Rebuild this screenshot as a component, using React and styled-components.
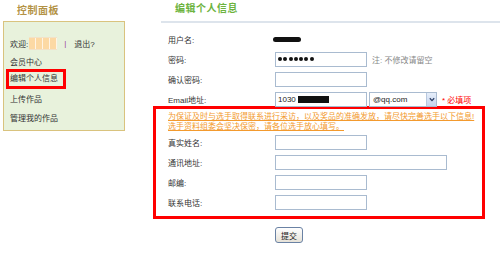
import React from 'react'
import styled, { createGlobalStyle } from 'styled-components'

const GlobalStyle = createGlobalStyle`
  html, body {
    margin: 0;
    padding: 0;
    background: #fff;
  }
  body {
    font-family: "Liberation Sans", "Noto Sans CJK SC", sans-serif;
    font-size: 8px;
    color: #333;
  }
`

const Page = styled.div`
  display: flex;
  width: 500px;
  height: 261px;
  overflow: hidden;
`

const Sidebar = styled.aside`
  width: 153px;
  flex: none;
`

const SideTitle = styled.h2`
  margin: 0;
  height: 21px;
  line-height: 21px;
  padding-left: 17px;
  font-size: 10px;
  font-weight: bold;
  letter-spacing: 0.5px;
  color: #b39245;
`

const SideBox = styled.div`
  margin-left: 3px;
  width: 122px;
  height: 110px;
  box-sizing: border-box;
  border: 1px solid #d9c37e;
  background: #e8f2dc;
  padding: 12px 0 0 6px;
`

const SideItem = styled.div`
  display: flex;
  align-items: center;
  height: 18.5px;
  color: #333;
`

const Marked = styled.span`
  display: inline-block;
  height: 14px;
  line-height: 14px;
  padding: 0 5px 0 1px;
  margin-left: -1px;
  margin-top: -2px;
  outline: 3px solid #f00;
`

const NameBlur = styled.span`
  display: inline-block;
  width: 28px;
  height: 11px;
  margin-left: 1px;
  border-top: 1px solid #f2e2c8;
  border-bottom: 1px solid #f2e2c8;
  background: repeating-linear-gradient(90deg, #fcd9a4 0 6px, #fff4e4 6px 7px);
`

const Pipe = styled.span`
  margin: 0 8px 0 7px;
  color: #9a3c9a;
`

const Main = styled.main`
  flex: 1;
`

const MainTitle = styled.h1`
  margin: 0;
  height: 21px;
  line-height: 17px;
  padding-left: 22px;
  font-size: 10px;
  font-weight: bold;
  letter-spacing: 0.5px;
  color: #6cb33e;
`

const Divider = styled.div`
  margin-left: 8px;
  height: 2px;
  background: #dde4ec;
`

const Form = styled.div`
  padding: 6px 0 0 15px;
`

const Row = styled.div`
  display: grid;
  grid-template-columns: 107px auto;
  align-items: center;
  height: 20px;
`

const Controls = styled.div`
  display: flex;
  align-items: center;
`

const Field = styled.div`
  display: flex;
  align-items: center;
  box-sizing: border-box;
  width: ${p => (p.$wide ? 172 : 92)}px;
  height: 15px;
  padding: 0 2px;
  border: 1px solid #a9bbd0;
  background: #fff;
  color: #222;
`

const Blob = styled.span`
  display: inline-block;
  width: ${p => p.$w}px;
  height: ${p => p.$h}px;
  margin-left: ${p => p.$ml || 0}px;
  background: #111;
  border-radius: ${p => p.$r || 0}px;
  filter: blur(${p => p.$blur || 0}px);
`

const Dot = styled.span`
  display: inline-block;
  width: 4px;
  height: 4px;
  margin-right: 1.3px;
  border-radius: 50%;
  background: #111;
`

const Hint = styled.span`
  margin-left: 5px;
  color: ${p => (p.$red ? '#f00' : '#888')};
`

const Select = styled.div`
  display: flex;
  align-items: center;
  box-sizing: border-box;
  width: 68px;
  height: 15px;
  margin-left: 2px;
  border: 1px solid #a9bbd0;
  background: #fff;
  color: #222;
`

const SelectText = styled.span`
  flex: 1;
  padding-left: 3px;
`

const SelectArrow = styled.span`
  display: flex;
  align-items: center;
  justify-content: center;
  width: 9px;
  height: 13px;
  border-left: 1px solid #b8c8de;
  background: linear-gradient(#e6eefa, #c6d5ee);
`

const Notice = styled.section`
  box-sizing: border-box;
  width: 332px;
  margin: -3px 0 0 -15px;
  border: 3px solid #f00;
  padding: 3px 0 4px 12px;
`

const NoticeText = styled.p`
  margin: 0;
  line-height: 10px;
  color: #f39a2e;
  text-decoration: underline;
  white-space: nowrap;
`

const Actions = styled.div`
  padding: 8px 0 0 107px;
`

const Submit = styled.button`
  width: 28px;
  height: 16px;
  padding: 0;
  border: 1px solid #6a82a4;
  border-radius: 3px;
  background: linear-gradient(#ffffff, #e6e2d8);
  font: inherit;
  color: #222;
`

const Arrow = () => (
  <svg width="6" height="5" viewBox="0 0 6 5">
    <path d="M0.8 1.2 L3 3.6 L5.2 1.2" fill="none" stroke="#2c3f66" strokeWidth="1.3" />
  </svg>
)

export default function App() {
  return (
    <Page>
      <GlobalStyle />
      <Sidebar>
        <SideTitle>控制面板</SideTitle>
        <SideBox>
          <SideItem>
            欢迎:<NameBlur /><Pipe>|</Pipe>退出?
          </SideItem>
          <SideItem>会员中心</SideItem>
          <SideItem><Marked>编辑个人信息</Marked></SideItem>
          <SideItem>上传作品</SideItem>
          <SideItem>管理我的作品</SideItem>
        </SideBox>
      </Sidebar>
      <Main>
        <MainTitle>编辑个人信息</MainTitle>
        <Divider />
        <Form>
          <Row>
            <span>用户名:</span>
            <Controls><Blob $w={28} $h={5} $ml={-2} $r={3} $blur={0.6} /></Controls>
          </Row>
          <Row>
            <span>密码:</span>
            <Controls>
              <Field>{Array.from({ length: 7 }, (_, i) => <Dot key={i} />)}</Field>
              <Hint>注: 不修改请留空</Hint>
            </Controls>
          </Row>
          <Row>
            <span>确认密码:</span>
            <Controls><Field /></Controls>
          </Row>
          <Row>
            <span>Email地址:</span>
            <Controls>
              <Field>1030<Blob $w={31} $h={7} $ml={2} /></Field>
              <Select>
                <SelectText>@qq.com</SelectText>
                <SelectArrow><Arrow /></SelectArrow>
              </Select>
              <Hint $red>* 必填项</Hint>
            </Controls>
          </Row>
          <Notice>
            <NoticeText>
              为保证及时与选手取得联系进行采访，以及奖品的准确发放，请尽快完善选手以下信息!
              <br />
              选手资料组委会坚决保密，请各位选手放心填写。
            </NoticeText>
            <Row>
              <span>真实姓名:</span>
              <Controls><Field /></Controls>
            </Row>
            <Row>
              <span>通讯地址:</span>
              <Controls><Field $wide /></Controls>
            </Row>
            <Row>
              <span>邮编:</span>
              <Controls><Field /></Controls>
            </Row>
            <Row>
              <span>联系电话:</span>
              <Controls><Field /></Controls>
            </Row>
          </Notice>
          <Actions>
            <Submit>提交</Submit>
          </Actions>
        </Form>
      </Main>
    </Page>
  )
}
